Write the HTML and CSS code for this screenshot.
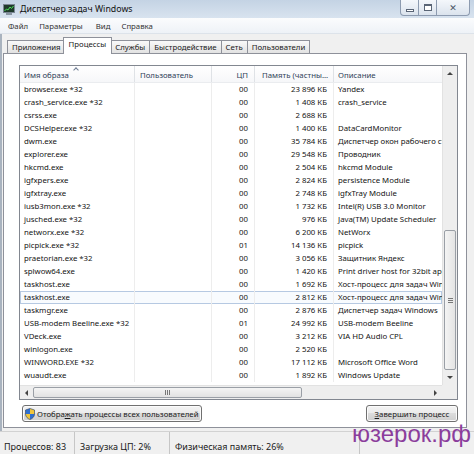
FILE: index.html
```html
<!DOCTYPE html>
<html lang="ru">
<head>
<meta charset="utf-8">
<title>Диспетчер задач Windows</title>
<link rel="stylesheet" href="styles.css">
</head>
<body>
<div class="window">
  <div class="titlebar">
    <span class="appicon">
      <svg viewBox="0 0 12 11" width="12" height="11">
        <rect x="0.5" y="0.5" width="11" height="8" fill="#1f3b2b" stroke="#7b8794"/>
        <polyline points="1.5,7 3.5,5 5,6 7,3 8.5,4.5 10.5,2" fill="none" stroke="#4fe05a" stroke-width="1"/>
        <rect x="3" y="9" width="6" height="2" fill="#8a96a3"/>
      </svg>
    </span>
    <span class="title">Диспетчер задач Windows</span>
    <div class="controls">
      <span class="ctl min"><span class="minbar"></span></span>
      <span class="ctl max"><span class="maxbox"></span></span>
      <span class="ctl close">✕</span>
    </div>
  </div>
  <div class="menubar">
    <span class="menu">Файл</span>
    <span class="menu">Параметры</span>
    <span class="menu">Вид</span>
    <span class="menu">Справка</span>
  </div>
  <div class="client">
    <div class="tabs">
      <span class="tab">Приложения</span>
      <span class="tab active">Процессы</span>
      <span class="tab">Службы</span>
      <span class="tab">Быстродействие</span>
      <span class="tab">Сеть</span>
      <span class="tab">Пользователи</span>
    </div>
    <div class="panel">
      <div class="listbox">
        <div class="listmain">
          <div class="table">
            <div class="row header">
              <span class="c name">Имя образа<span class="sortarrow"></span></span>
              <span class="c user">Пользователь</span>
              <span class="c cpu">ЦП</span>
              <span class="c memh">Память (частны...</span>
              <span class="c desc">Описание</span>
            </div>
            <div class="row"><span class="c name">browser.exe *32</span><span class="c user"></span><span class="c cpu">00</span><span class="c mem">23 896 КБ</span><span class="c desc">Yandex</span></div>
            <div class="row"><span class="c name">crash_service.exe *32</span><span class="c user"></span><span class="c cpu">00</span><span class="c mem">1 408 КБ</span><span class="c desc">crash_service</span></div>
            <div class="row"><span class="c name">csrss.exe</span><span class="c user"></span><span class="c cpu">00</span><span class="c mem">2 688 КБ</span><span class="c desc"></span></div>
            <div class="row"><span class="c name">DCSHelper.exe *32</span><span class="c user"></span><span class="c cpu">00</span><span class="c mem">1 400 КБ</span><span class="c desc">DataCardMonitor</span></div>
            <div class="row"><span class="c name">dwm.exe</span><span class="c user"></span><span class="c cpu">00</span><span class="c mem">35 784 КБ</span><span class="c desc">Диспетчер окон рабочего стола</span></div>
            <div class="row"><span class="c name">explorer.exe</span><span class="c user"></span><span class="c cpu">00</span><span class="c mem">29 548 КБ</span><span class="c desc">Проводник</span></div>
            <div class="row"><span class="c name">hkcmd.exe</span><span class="c user"></span><span class="c cpu">00</span><span class="c mem">2 504 КБ</span><span class="c desc">hkcmd Module</span></div>
            <div class="row"><span class="c name">igfxpers.exe</span><span class="c user"></span><span class="c cpu">00</span><span class="c mem">2 824 КБ</span><span class="c desc">persistence Module</span></div>
            <div class="row"><span class="c name">igfxtray.exe</span><span class="c user"></span><span class="c cpu">00</span><span class="c mem">2 748 КБ</span><span class="c desc">igfxTray Module</span></div>
            <div class="row"><span class="c name">iusb3mon.exe *32</span><span class="c user"></span><span class="c cpu">00</span><span class="c mem">1 732 КБ</span><span class="c desc">Intel(R) USB 3.0 Monitor</span></div>
            <div class="row"><span class="c name">jusched.exe *32</span><span class="c user"></span><span class="c cpu">00</span><span class="c mem">976 КБ</span><span class="c desc">Java(TM) Update Scheduler</span></div>
            <div class="row"><span class="c name">networx.exe *32</span><span class="c user"></span><span class="c cpu">00</span><span class="c mem">6 200 КБ</span><span class="c desc">NetWorx</span></div>
            <div class="row"><span class="c name">picpick.exe *32</span><span class="c user"></span><span class="c cpu">01</span><span class="c mem">14 136 КБ</span><span class="c desc">picpick</span></div>
            <div class="row"><span class="c name">praetorian.exe *32</span><span class="c user"></span><span class="c cpu">00</span><span class="c mem">3 056 КБ</span><span class="c desc">Защитник Яндекс</span></div>
            <div class="row"><span class="c name">splwow64.exe</span><span class="c user"></span><span class="c cpu">00</span><span class="c mem">1 420 КБ</span><span class="c desc">Print driver host for 32bit applications</span></div>
            <div class="row"><span class="c name">taskhost.exe</span><span class="c user"></span><span class="c cpu">00</span><span class="c mem">1 692 КБ</span><span class="c desc">Хост-процесс для задач Windows</span></div>
            <div class="row focused"><span class="c name">taskhost.exe</span><span class="c user"></span><span class="c cpu">00</span><span class="c mem">2 812 КБ</span><span class="c desc">Хост-процесс для задач Windows</span></div>
            <div class="row"><span class="c name">taskmgr.exe</span><span class="c user"></span><span class="c cpu">00</span><span class="c mem">2 876 КБ</span><span class="c desc">Диспетчер задач Windows</span></div>
            <div class="row"><span class="c name">USB-modem Beeline.exe *32</span><span class="c user"></span><span class="c cpu">01</span><span class="c mem">24 992 КБ</span><span class="c desc">USB-modem Beeline</span></div>
            <div class="row"><span class="c name">VDeck.exe</span><span class="c user"></span><span class="c cpu">00</span><span class="c mem">3 212 КБ</span><span class="c desc">VIA HD Audio CPL</span></div>
            <div class="row"><span class="c name">winlogon.exe</span><span class="c user"></span><span class="c cpu">00</span><span class="c mem">2 520 КБ</span><span class="c desc"></span></div>
            <div class="row"><span class="c name">WINWORD.EXE *32</span><span class="c user"></span><span class="c cpu">00</span><span class="c mem">17 112 КБ</span><span class="c desc">Microsoft Office Word</span></div>
            <div class="row"><span class="c name">wuaudt.exe</span><span class="c user"></span><span class="c cpu">00</span><span class="c mem">1 892 КБ</span><span class="c desc">Windows Update</span></div>
          </div>
          <div class="vscroll">
            <span class="sbtn"><span class="tri up"></span></span>
            <span class="vspace"></span>
            <span class="vthumb"><span class="grip-h"></span></span>
            <span class="sbtn"><span class="tri down"></span></span>
          </div>
        </div>
        <div class="hrow">
          <div class="hscroll">
            <span class="hbtn"><span class="tri left"></span></span>
            <span class="hthumb"><span class="grip-v"></span></span>
            <span class="hspace"></span>
            <span class="hbtn"><span class="tri right"></span></span>
          </div>
          <span class="corner"></span>
        </div>
      </div>
      <div class="buttons">
        <span class="button showall">
          <svg class="shield" viewBox="0 0 10 12" width="10" height="12">
            <defs><clipPath id="sh"><path d="M5 0.5 L9.5 2 V6 C9.5 9 7 10.8 5 11.5 C3 10.8 0.5 9 0.5 6 V2 Z"/></clipPath></defs>
            <g clip-path="url(#sh)">
              <rect x="0" y="0" width="5" height="6" fill="#2f6fd0"/>
              <rect x="5" y="0" width="5" height="6" fill="#f0c53a"/>
              <rect x="0" y="6" width="5" height="6" fill="#f0c53a"/>
              <rect x="5" y="6" width="5" height="6" fill="#2f6fd0"/>
            </g>
            <path d="M5 0.5 L9.5 2 V6 C9.5 9 7 10.8 5 11.5 C3 10.8 0.5 9 0.5 6 V2 Z" fill="none" stroke="#3a4e6a" stroke-width="0.7"/>
          </svg>
          <span>Отобра<u>ж</u>ать процессы всех пользователей</span>
        </span>
        <span class="button endproc"><span><u>З</u>авершить процесс</span></span>
      </div>
    </div>
  </div>
  <div class="statusbar">
    <span class="sb s1">Процессов: 83</span>
    <span class="sb s2">Загрузка ЦП: 2%</span>
    <span class="sb s3">Физическая память: 26%</span>
    <span class="sb s4"></span>
  </div>
  <div class="watermark">юзерок.рф</div>
</div>
</body>
</html>
```
FILE: styles.css
```css
* { box-sizing: border-box; }
html, body { margin: 0; padding: 0; }
body {
  width: 474px;
  height: 454px;
  overflow: hidden;
  font-family: "Noto Sans", "DejaVu Sans", sans-serif;
  font-size: 7.8px;
  color: #141414;
  background: #c9d6e4;
}
.window {
  position: relative;
  width: 474px;
  height: 454px;
  display: flex;
  flex-direction: column;
}

/* title bar */
.titlebar {
  height: 18px;
  display: flex;
  align-items: center;
  padding-left: 3px;
  background: linear-gradient(#c4d3e4, #d8e3ef);
}
.appicon svg { display: block; }
.title {
  margin-left: 5px;
  font-size: 8.8px;
  color: #111;
}
.controls {
  margin-left: auto;
  margin-right: 4px;
  align-self: flex-start;
  display: flex;
}
.ctl {
  height: 16px;
  border: 1px solid #8d9bb0;
  border-top: none;
  background: linear-gradient(#f4f7fb, #dbe3ed);
  display: flex;
  align-items: center;
  justify-content: center;
  color: #4a5566;
  font-size: 9px;
}
.ctl.min { width: 19px; border-radius: 0 0 0 4px; }
.ctl.max { width: 18px; border-left: none; }
.ctl.close { width: 33px; border-left: none; border-radius: 0 0 4px 0; }
.minbar { width: 8px; height: 3px; border: 1px solid #5a6576; background: #fff; margin-top: 5px; }
.maxbox { width: 8px; height: 7px; border: 1px solid #5a6576; border-top-width: 2px; background: #fff; }

/* menu */
.menubar {
  height: 16px;
  display: flex;
  align-items: center;
  padding-left: 8px;
  background: linear-gradient(#fbfcfd, #eef2f7);
  border-bottom: 1px solid #dde3ea;
  font-size: 7.8px;
  color: #333;
}
.menu { margin-right: 11px; }
.menu:nth-child(2) { margin-right: 13px; }

/* client */
.client {
  flex: 1;
  display: flex;
  flex-direction: column;
  background: #f0f0f0;
  padding: 3px 0 3px 1px;
  border-left: 2px solid #a9b3bf;
}
.tabs {
  height: 16px;
  display: flex;
  align-items: flex-end;
  padding-left: 4px;
}
.tab {
  height: 13px;
  padding: 0 4px;
  border: 1px solid #8e919a;
  border-bottom: none;
  border-right: none;
  background: linear-gradient(#f9f9f9, #e2e2e2);
  display: flex;
  align-items: center;
  font-size: 7.8px;
  color: #1a1a1a;
}
.tab:last-child { border-right: 1px solid #8e919a; }
.tab.active {
  position: relative;
  z-index: 1;
  height: 17px;
  margin: 0 -1px -1px -2px;
  padding: 1px 5px 0 5px;
  border-right: 1px solid #8e919a;
  background: #fff;
  align-items: flex-start;
}
.tab.active + .tab { border-left: none; }

.panel {
  width: 464px;
  height: 375px;
  border: 1px solid #8e919a;
  background: #fff;
  padding: 11px 8px 0 15px;
  display: flex;
  flex-direction: column;
}
.listbox {
  height: 335px;
  border: 1px solid #828790;
  display: flex;
  flex-direction: column;
  background: #fff;
}
.listmain {
  flex: 1;
  display: flex;
  min-height: 0;
}
.table {
  flex: 1;
  overflow: hidden;
}
.row {
  display: grid;
  grid-template-columns: 115px 77px 43px 79px 108px;
  height: 13px;
  line-height: 13px;
  white-space: nowrap;
}
.c {
  overflow: hidden;
  border-right: 1px solid #ededed;
}
.c.desc { border-right: none; }
.name { padding-left: 4px; }
.user { padding-left: 5px; }
.cpu { text-align: right; padding-right: 6px; }
.mem { text-align: right; padding-right: 6px; }
.desc { padding-left: 4px; }
.memh { padding-left: 7px; }
.row.header {
  height: 17px;
  line-height: 19px;
  color: #2f3f58;
  background: linear-gradient(#ffffff, #f6f7f9);
  border-bottom: 1px solid #eaecef;
}
.row.header .c { border-right: 1px solid #dfe2e6; position: relative; }
.row.header .c.desc { border-right: none; }
.sortarrow {
  position: absolute;
  left: 54px;
  top: 2px;
  width: 4px;
  height: 4px;
  border-left: 1px solid #6d7c92;
  border-top: 1px solid #6d7c92;
  transform: rotate(45deg);
}
.row.focused {
  background: #f8fbfe;
  box-shadow: inset 0 0 0 1px #b6c9e2;
}

/* scrollbars */
.vscroll {
  width: 15px;
  display: flex;
  flex-direction: column;
  background: #eeeeee;
  border-left: 1px solid #e2e2e2;
}
.sbtn {
  height: 15px;
  display: flex;
  align-items: center;
  justify-content: center;
}
.vspace { flex: 0 0 149px; }
.vthumb {
  height: 140px;
  margin: 0 1px;
  border: 1px solid #9a9fa6;
  border-radius: 2px;
  background: linear-gradient(90deg, #f4f4f4, #e4e4e4);
  display: flex;
  align-items: center;
  justify-content: center;
}
.grip-h {
  width: 5px;
  height: 5px;
  border-top: 1px solid #777;
  border-bottom: 1px solid #777;
  position: relative;
}
.grip-h::after {
  content: "";
  position: absolute;
  left: 0;
  right: 0;
  top: 1px;
  border-top: 1px solid #777;
}
.tri { width: 0; height: 0; }
.tri.up { border-left: 3px solid transparent; border-right: 3px solid transparent; border-bottom: 3px solid #444; }
.tri.down { border-left: 3px solid transparent; border-right: 3px solid transparent; border-top: 3px solid #444; }
.tri.left { border-top: 3px solid transparent; border-bottom: 3px solid transparent; border-right: 3px solid #444; }
.tri.right { border-top: 3px solid transparent; border-bottom: 3px solid transparent; border-left: 3px solid #444; }

.hrow {
  height: 14px;
  display: flex;
}
.hscroll {
  flex: 1;
  display: flex;
  background: #eeeeee;
  border-top: 1px solid #e2e2e2;
}
.hbtn {
  width: 13px;
  display: flex;
  align-items: center;
  justify-content: center;
}
.hthumb {
  width: 269px;
  margin: 1px 0;
  border: 1px solid #9a9fa6;
  border-radius: 2px;
  background: linear-gradient(#f4f4f4, #e2e2e2);
  display: flex;
  align-items: center;
  justify-content: center;
}
.grip-v {
  width: 5px;
  height: 5px;
  border-left: 1px solid #777;
  border-right: 1px solid #777;
  position: relative;
}
.grip-v::after {
  content: "";
  position: absolute;
  top: 0;
  bottom: 0;
  left: 1px;
  border-left: 1px solid #777;
}
.hspace { flex: 1; }
.corner { width: 15px; background: #eeeeee; }

/* buttons */
.buttons {
  margin-top: 5px;
  display: flex;
  justify-content: space-between;
  padding-left: 3px;
}
.button {
  height: 17px;
  border: 1px solid #707070;
  border-radius: 3px;
  background: linear-gradient(#f3f3f3, #ebebeb 50%, #dcdcdc 50%, #cfcfcf);
  box-shadow: inset 0 0 0 1px #fbfbfb;
  display: flex;
  align-items: center;
  white-space: nowrap;
  font-size: 7.8px;
  color: #1a1a1a;
}
.showall { width: 180px; padding-left: 2px; }
.showall .shield { margin-right: 2px; flex: none; }
.endproc { width: 92px; justify-content: center; }

/* status bar */
.statusbar {
  height: 23px;
  display: flex;
  background: #f0f0f0;
  border-top: 1px solid #d2d2d2;
  font-size: 9px;
  color: #1a1a1a;
}
.sb {
  height: 100%;
  display: flex;
  align-items: center;
  padding: 6px 0 0 4px;
  border-right: 1px solid #c6c6c6;
  white-space: nowrap;
}
.s1 { width: 75px; }
.s2 { width: 95px; padding-left: 5px; }
.s3 { width: 190px; padding-left: 5px; }
.s4 { flex: 1; border-right: none; }

.watermark {
  position: absolute;
  left: 352px;
  top: 420px;
  font-family: "Liberation Sans", "DejaVu Sans", sans-serif;
  font-size: 24px;
  color: #8b3d9c;
}
```
